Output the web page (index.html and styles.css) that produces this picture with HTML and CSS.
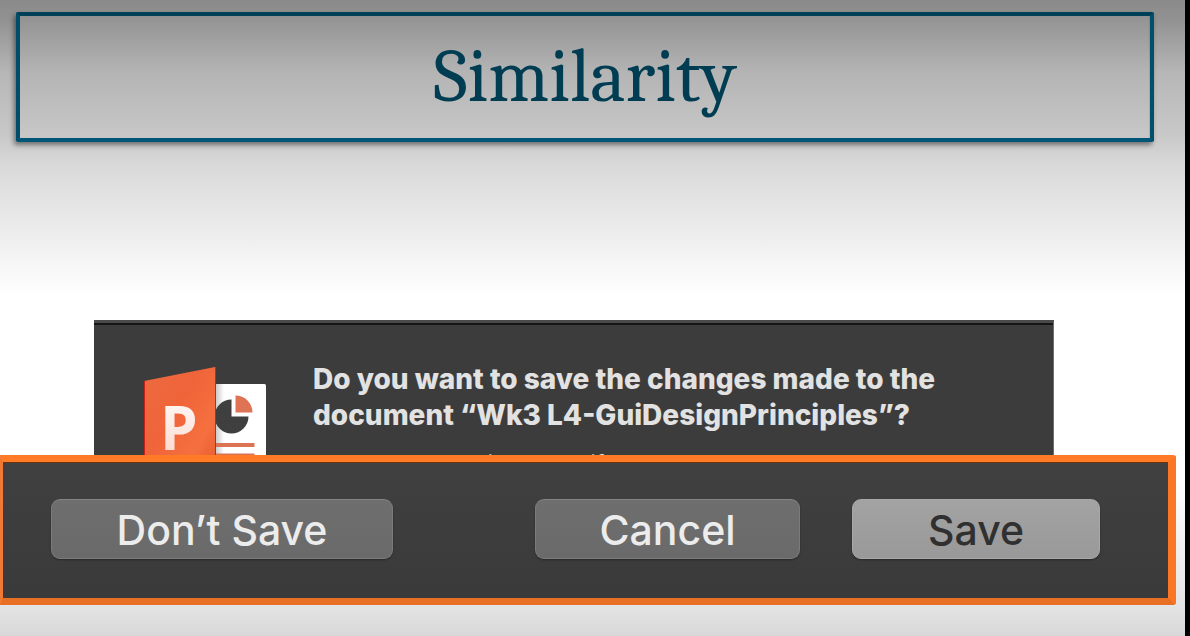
FILE: index.html
```html
<!DOCTYPE html>
<html lang="en">
<head>
<meta charset="utf-8">
<title>Similarity</title>
<link rel="stylesheet" href="styles.css">
</head>
<body>
<main class="slide">
  <header class="title-box"><h1 class="title">Similarity</h1></header>

  <section class="dialog" aria-labelledby="question">
    <svg class="app-icon" viewBox="0 0 122 122" aria-hidden="true">
      <defs>
        <linearGradient id="door" x1="0" y1="0" x2="1" y2="1">
          <stop offset="0" stop-color="#ec6a3f"/>
          <stop offset=".4" stop-color="#f0643a"/>
          <stop offset=".7" stop-color="#f5703f"/>
          <stop offset="1" stop-color="#e2522a"/>
        </linearGradient>
        <linearGradient id="fold" x1="0" y1="0" x2="1" y2="0">
          <stop offset="0" stop-color="#c4c4c4"/>
          <stop offset="1" stop-color="#ffffff"/>
        </linearGradient>
        <linearGradient id="letter" x1="0" y1="0" x2="0" y2="1">
          <stop offset="0" stop-color="#ffffff"/>
          <stop offset="1" stop-color="#fbd3c6"/>
        </linearGradient>
      </defs>
      <path d="M70 17h50.500q1.500 0 1.500 1.500V106H70z" fill="#fff"/>
      <path d="M71 17h9v89h-9z" fill="url(#fold)"/>
      <path d="M87.500 49.500V32.500a17 17 0 1 0 17 17z" fill="#3f3f3f"/>
      <path d="M91.500 45.500V28.500a17 17 0 0 1 17 17z" fill="#de7455"/>
      <path d="M71 76h39.500v4H71zM71 86.500h39.500v4H71z" fill="#dc7355"/>
      <path d="M0 14 71 0V122L0 108z" fill="url(#door)"/>
      <path d="M.500 14V108" stroke="#c91f16"/>
      <path d="M71.500 0V122" stroke="#7c4638"/>
      <text class="app-letter" x="16" y="83" fill="url(#letter)">P</text>
    </svg>
    <div class="message">
      <h2 class="question" id="question">Do you want to save the changes made to the document “Wk3 L4-GuiDesignPrinciples”?</h2>
      <p class="detail">Your changes will be lost if you don’t save them.</p>
    </div>
  </section>

  <section class="actions" aria-label="Dialog actions">
    <button class="button" type="button">Don’t Save</button>
    <button class="button button-cancel" type="button">Cancel</button>
    <button class="button button-primary" type="button">Save</button>
  </section>
</main>
</body>
</html>
```
FILE: styles.css
```css
* {
  box-sizing: border-box;
}

body {
  margin: 0;
  background: #000;
  font-family: Inter, "Liberation Sans", sans-serif;
}

.slide {
  display: flow-root;
  min-height: 100vh;
  margin-right: 5px;
  padding: 12px 0 31px;
  background: linear-gradient(
    #8a8a8a 0, #929292 20px, #b6b6b6 72px, #c8c8c8 135px,
    #d9d9d9 165px, #ffffff 295px, #ffffff 480px, #e4e4e4 606px, #d8d8d8 636px);
}

.title-box {
  margin: 0 31px 0 16px;
  padding: 15px 0;
  border: 4px solid;
  border-color: #003f58 #00506c #005676 #004d69;
  border-radius: 2px;
  box-shadow: -2px 3px 5px rgb(0 0 0 / 45%), inset -1px 0 1px rgb(0 0 0 / 10%);
  background: linear-gradient(#929292 0, #b4b4b4 56px, #c8c8c8 122px);
}

.title {
  margin: 0;
  color: #003d52;
  font-family: Cambria, Caladea, "Liberation Serif", serif;
  font-size: 75px;
  font-weight: 400;
  line-height: 92px;
  text-align: center;
}

.dialog {
  display: flex;
  gap: 47px;
  margin: 178px 131px 0 94px;
  padding: 38px 80px 24px 50px;
  border-top: 3px solid #4a4a4a;
  border-right: 1px solid #6e6e6e;
  background: #3c3c3c;
  box-shadow: inset 0 2px #151515;
}

.app-icon {
  flex: none;
  width: 122px;
  height: 122px;
  margin-top: 6px;
}

.app-letter {
  font-family: "Open Sans", sans-serif;
  font-size: 60px;
  font-weight: 700;
}

.message {
  flex: 1;
}

.question {
  margin: 0;
  color: #e2e2e2;
  font-size: 28px;
  font-weight: 800;
  line-height: 36px;
  text-wrap: balance;
}

.detail {
  margin: 17px 0 0;
  color: #dcdcdc;
  font-size: 23px;
  line-height: 28px;
}

.actions {
  position: relative;
  display: grid;
  grid-template-columns: 342fr 142fr 265fr 52fr 248fr;
  margin: -58px 9px 0 0;
  padding: 37px 68px 39px 48px;
  border: solid;
  border-width: 7px 8px 7px 3px;
  border-color: #ff7b26 #fa7726 #e77024 #f07a35;
  border-radius: 0 3px 3px 0;
  background: linear-gradient(#414040, #3a3a3a);
  box-shadow: inset 0 1px #6b3513;
}

.button {
  padding: 2px 0 0;
  border: 1px solid #7b7b7b;
  border-top-color: #858585;
  border-radius: 9px;
  background: linear-gradient(#6e6e6e, #6a6a6a);
  box-shadow: 0 1px 2px rgb(0 0 0 / 35%);
  color: #ececec;
  font-family: inherit;
  font-size: 41px;
  font-weight: 500;
  line-height: 56px;
}

.button-cancel {
  grid-column: 3;
}

.button-primary {
  grid-column: 5;
  border-color: #a8a8a8;
  background: linear-gradient(#a3a3a3, #999999);
  color: #303030;
}
```
